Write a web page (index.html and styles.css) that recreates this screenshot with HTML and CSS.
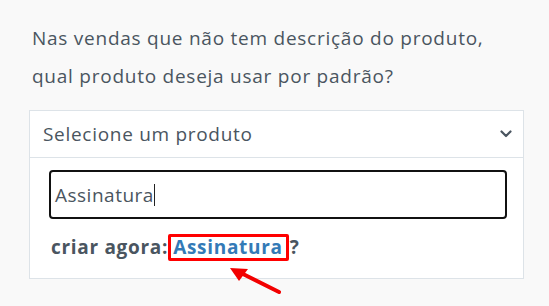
FILE: index.html
```html
<!DOCTYPE html>
<html lang="pt">
<head>
<meta charset="utf-8">
<link rel="stylesheet" href="styles.css">
</head>
<body>
<div class="page">
  <p class="question">Nas vendas que não tem descrição do produto,<br>qual produto deseja usar por padrão?</p>
  <div class="card">
    <div class="card-head">
      <span class="placeholder">Selecione um produto</span>
      <svg class="chevron" width="12" height="8" viewBox="0 0 12 8"><path d="M1.5 1.5 L6 6 L10.5 1.5" fill="none" stroke="#4a5560" stroke-width="2.2" stroke-linecap="round" stroke-linejoin="round"/></svg>
    </div>
    <div class="card-body">
      <div class="search"><span class="typed">Assinatura</span><span class="caret"></span></div>
      <div class="create">criar agora:<span class="mark"><a class="link">Assinatura</a></span>?</div>
    </div>
  </div>
  <svg class="arrow" width="70" height="40" viewBox="0 0 70 40">
    <path d="M55 30 L17 11" stroke="#f20000" stroke-width="4" stroke-linecap="round"/>
    <path d="M6 6 L24 7 L15 19 Z" fill="#f20000"/>
  </svg>
</div>
</body>
</html>
```
FILE: styles.css
```css
html, body { margin: 0; padding: 0; }
body {
  background: #f9f9f9;
  font-family: "Open Sans", "Noto Sans", sans-serif;
  color: #4a5560;
  width: 549px;
  height: 306px;
  overflow: hidden;
}
.page {
  position: relative;
  padding: 20px 25px 0 29px;
}
.question {
  margin: 0 0 0 3px;
  font-size: 19px;
  letter-spacing: 0.75px;
  line-height: 37.5px;
}
.card {
  margin-top: 15px;
  background: #fff;
  border: 1px solid #dde3e8;
}
.card-head {
  height: 46px;
  border-bottom: 1px solid #dde3e8;
  display: flex;
  align-items: center;
  justify-content: space-between;
  padding: 0 11px 0 13px;
  font-size: 19px;
  letter-spacing: 0.7px;
}
.chevron { display: block; }
.card-body {
  padding: 12px 16px 17px 19px;
}
.search {
  height: 45px;
  border: 2px solid #111;
  border-radius: 4px;
  display: flex;
  align-items: center;
  padding-left: 4px;
  font-size: 19px;
  letter-spacing: 0.5px;
}
.caret {
  display: inline-block;
  width: 1px;
  height: 22px;
  background: #222;
}
.create {
  margin-top: 15px;
  padding-left: 2px;
  font-size: 19px;
  letter-spacing: 0.7px;
  font-weight: 700;
  line-height: 27px;
  display: flex;
  align-items: center;
}
.mark {
  border: 3px solid #f00;
  border-radius: 2px;
  padding: 0 3px 0 2px;
  line-height: 21px;
  margin-right: 1px;
}
.link { color: #337ab7; }
.arrow {
  position: absolute;
  left: 224px;
  top: 262px;
}
```
